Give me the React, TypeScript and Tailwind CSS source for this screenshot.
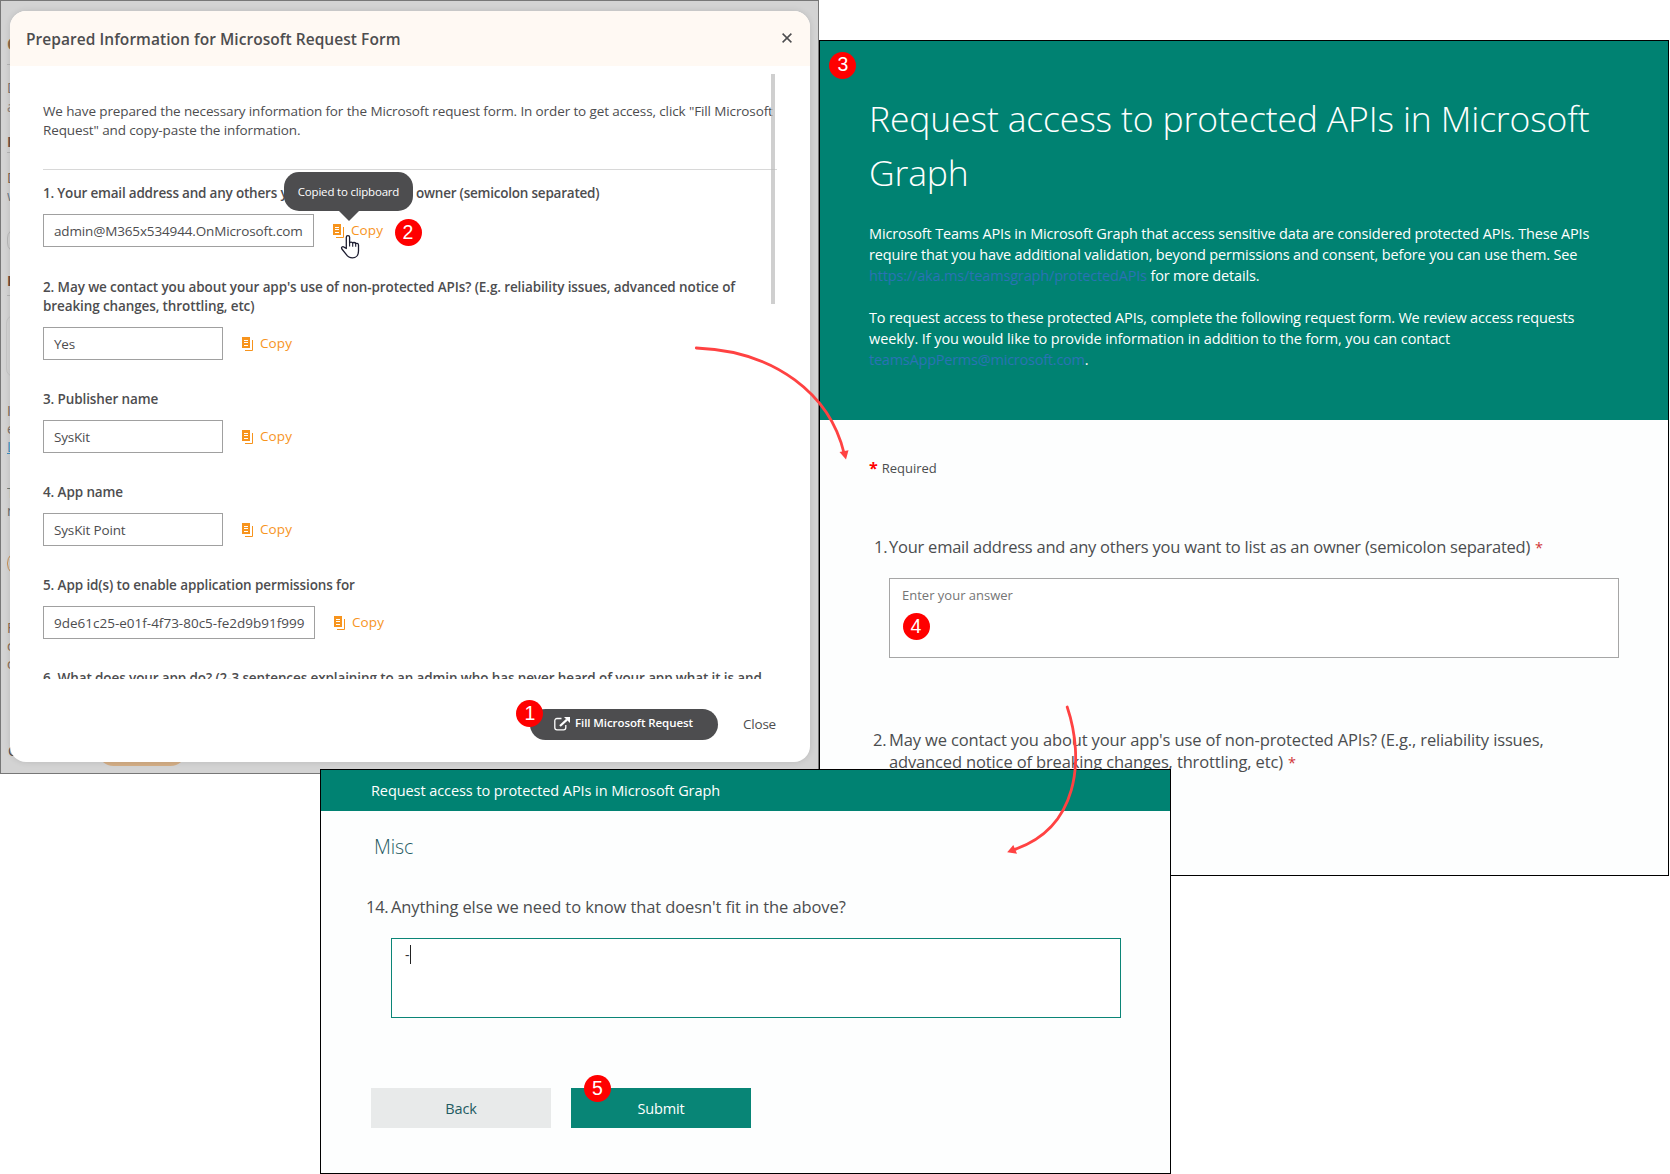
import type { ReactNode } from "react";

function CopyIcon() {
  return (
    <svg width="12" height="15" viewBox="0 0 12 15" className="shrink-0">
      <rect x="0" y="0" width="8" height="11" fill="#f7941d" />
      <path d="M2 3.5h4M2 5.5h4M2 8.5h4" stroke="#fff" strokeWidth="1" />
      <path d="M10.5 3v10.5H3" fill="none" stroke="#f7941d" strokeWidth="1" />
    </svg>
  );
}

function ExternalIcon() {
  return (
    <svg width="16" height="14" viewBox="0 0 16 14" className="relative -top-px shrink-0">
      <path
        d="M7.5 1.5H3A2.2 2.2 0 0 0 .8 3.7v6.9A2.2 2.2 0 0 0 3 12.8h6.6a2.2 2.2 0 0 0 2.2-2.2V8"
        fill="none"
        stroke="#fff"
        strokeWidth="1.3"
      />
      <path d="M6 9 13 2.6" stroke="#fff" strokeWidth="2.2" />
      <path d="M10 0h6v6z" fill="#fff" />
    </svg>
  );
}

function HandCursor() {
  return (
    <svg width="20" height="25" viewBox="0 0 20 25" className="absolute left-[340px] top-[234px]">
      <path
        d="M6.3 14.5V3.2C6.3 1.1 9.6 1.1 9.6 3.2V9C9.7 7.7 12.6 7.7 12.7 9.3 12.8 8.1 15.6 8.2 15.7 9.9 15.9 9 18.5 9.1 18.5 11V17C18.5 21.5 15.7 23.9 12.5 23.9 9 23.9 7.5 22.4 6 20.2L1.9 15C.8 13.1 2.7 12 4 13.1z"
        fill="#fff"
        stroke="#1c1c30"
        strokeWidth="1.3"
        strokeLinejoin="round"
      />
      <path d="M9.6 8.5v4M12.7 9.2v3.5M15.7 9.8v3" stroke="#1c1c30" strokeWidth="1.1" />
    </svg>
  );
}

function Badge({ n, className }: { n: number; className: string }) {
  return (
    <span
      className={`absolute flex size-[27px] items-center justify-center rounded-full bg-[#ff0000] font-['Liberation_Sans',sans-serif] text-[19.5px] leading-none text-white ${className}`}
    >
      {n}
    </span>
  );
}

function Field({
  label,
  value,
  box,
  className = "mb-[30px]",
}: {
  label: ReactNode;
  value: string;
  box: string;
  className?: string;
}) {
  return (
    <div className={className}>
      <div className="text-[13.5px] leading-[19px] font-semibold tracking-[-0.11px] whitespace-nowrap">{label}</div>
      <div className="mt-[11px] flex items-center">
        <div className={`flex h-[33px] items-center border border-[#a0a0a0] bg-white pt-px pl-[10px] text-[13.5px] whitespace-nowrap ${box}`}>
          {value}
        </div>
        <div className="mt-[2px] ml-[19px] flex items-center gap-[6px] text-[13.5px] tracking-[0.1px] text-[#f7941d]">
          <CopyIcon />
          <span className="relative -top-px">Copy</span>
        </div>
      </div>
    </div>
  );
}

/* Page content that shows in the strip left of the dialog. */
const strip: { text: string; style: string }[] = [
  { text: "C", style: "top-[34px] text-[16px] font-bold text-[#8a6a4c]" },
  { text: "D", style: "top-[77px] text-[#7d726c]" },
  { text: "a", style: "top-[96px] text-[#8d8178]" },
  { text: "P", style: "top-[131px] font-bold text-[#6e5448]" },
  { text: "D", style: "top-[167px] text-[#7d6450]" },
  { text: "w", style: "top-[185px] text-[#6f7a85]" },
  { text: "P", style: "top-[270px] font-bold text-[#6e4c3c]" },
  { text: "I", style: "top-[400px] text-[#7d6450]" },
  { text: "e", style: "top-[418px] text-[#7d7068]" },
  { text: "L", style: "top-[436px] text-[#3f8fc0] underline" },
  { text: "T", style: "top-[482px] text-[#6f7a75]" },
  { text: "n", style: "top-[500px] text-[#6a6a6a]" },
  { text: "F", style: "top-[617px] text-[#8a6a50]" },
  { text: "c", style: "top-[635px] text-[#8a6a50]" },
  { text: "c", style: "top-[653px] text-[#8a6a50]" },
];

function PreparedInfoWindow() {
  return (
    <section className="absolute left-0 top-0 h-[774px] w-[819px] overflow-hidden border border-[#777] bg-[#d3d3d3] text-[#4d4d4f]">
      {strip.map((s, i) => (
        <span key={i} className={`absolute left-[6px] w-[4px] overflow-hidden text-[14px] leading-[19px] ${s.style}`}>
          {s.text}
        </span>
      ))}
      <span className="absolute left-[6px] top-[63px] h-px w-4 bg-[#b5b5b5]" />
      <span className="absolute left-[6px] top-[151px] h-px w-4 bg-[#b5b5b5]" />
      <span className="absolute left-[6px] top-[294px] h-px w-4 bg-[#b5b5b5]" />
      <span className="absolute left-[6px] top-[227px] h-[25px] w-8 rounded-l-[10px] border border-[#b8b8b8]" />
      <span className="absolute left-[5px] top-[314px] h-[62px] w-8 rounded-l-[8px] border border-[#c6c6c6]" />
      <span className="absolute left-[6px] top-[550px] h-[25px] w-8 rounded-l-[12px] border border-[#c99255]" />
      <span className="absolute left-[7px] top-[740px] text-[14px] leading-[20px]">C</span>
      <span className="absolute left-[97px] top-[734px] h-[31px] w-[88px] rounded-full bg-[#d4ae86]" />

      <div className="absolute left-[9px] top-[10px] flex h-[751px] w-[800px] flex-col overflow-hidden rounded-[16px] bg-white shadow-[0_0_6px_rgba(0,0,0,0.12)]">
        <header className="flex h-[55px] shrink-0 items-center justify-between bg-[#fff9f3] pr-[17px] pl-4">
          <h1 className="text-[15.5px] leading-[20px] font-semibold tracking-[0.05px]">
            Prepared Information for Microsoft Request Form
          </h1>
          <svg width="12" height="12" viewBox="0 0 12 12" className="relative -top-px">
            <path d="M1.6 1.6l8.8 8.8M10.4 1.6 1.6 10.4" stroke="#4d4d4f" strokeWidth="1.5" />
          </svg>
        </header>

        <div className="relative h-[613px] shrink-0 overflow-hidden pt-[36px] pl-[33px]">
          <p className="text-[13.5px] leading-[19px] tracking-[-0.115px] whitespace-nowrap">
            We have prepared the necessary information for the Microsoft request form. In order to get access, click "Fill Microsoft
            <br />
            Request" and copy-paste the information.
          </p>
          <div className="mt-[29px] mb-[14px] h-px w-[734px] bg-[#d8d8d8]" />
          <Field
            className="mb-[31px]"
            label={
              <span className="tracking-[-0.2px]">
                1. Your email address and any others y
                <span className="tracking-[-0.27px]">ou want to list as an</span>{" "}
                <span className="tracking-[-0.22px]">owner (semicolon separated)</span>
              </span>
            }
            value="admin@M365x534944.OnMicrosoft.com"
            box="w-[271px] tracking-[-0.14px]"
          />
          <Field
            label={
              <>
                2. May we contact you about your app's use of non-protected APIs? (E.g. reliability issues, advanced notice of
                <br />
                breaking changes, throttling, etc)
              </>
            }
            value="Yes"
            box="w-[180px] tracking-[-0.2px]"
          />
          <Field label="3. Publisher name" value="SysKit" box="w-[180px] tracking-[-0.2px]" />
          <Field label="4. App name" value="SysKit Point" box="w-[180px] tracking-[-0.15px]" />
          <Field
            label="5. App id(s) to enable application permissions for"
            value="9de61c25-e01f-4f73-80c5-fe2d9b91f999"
            box="w-[272px]"
          />
          <Field
            label="6. What does your app do? (2-3 sentences explaining to an admin who has never heard of your app what it is and"
            value=""
            box="w-[180px]"
          />
          <div className="absolute top-[8px] left-[761px] h-[230px] w-[4px] bg-[#bbbbbb]/70" />
        </div>

        <footer className="flex justify-end pt-[30px] pr-[34px]">
          <button className="flex h-[31px] w-[188px] items-center rounded-full bg-[#4d4d4f] pl-6 text-[11.5px] font-semibold tracking-[-0.08px] whitespace-nowrap text-white">
            <ExternalIcon />
            <span className="relative -top-[2px] ml-[5px]">Fill Microsoft Request</span>
          </button>
          <button className="ml-[25px] text-[13.5px] tracking-[-0.2px]">Close</button>
        </footer>
      </div>

      <div className="absolute left-[283px] top-[171px] flex h-[39px] w-[129px] items-center justify-center rounded-[15px] bg-[#4d4d4f] text-[11.5px] tracking-[-0.19px] whitespace-nowrap text-white">
        Copied to clipboard
        <svg width="22" height="11" viewBox="0 0 22 11" className="absolute top-[38px] left-[54px]">
          <path d="M0 0h22L11 11z" fill="#4d4d4f" />
        </svg>
      </div>
    </section>
  );
}

function RequestFormWindow() {
  return (
    <section className="absolute left-[819px] top-[40px] h-[836px] w-[850px] border border-black bg-[#fdfefe] text-[#4b4d4f]">
      <header className="h-[379px] bg-[#008272] pt-[50px] pl-[49px] whitespace-nowrap text-white">
        <h2 className="text-[35.5px] leading-[54px] font-light tracking-[-0.14px]">
          Request access to protected APIs in Microsoft
          <br />
          Graph
        </h2>
        <p className="mt-[23px] h-[63px] pt-px text-[14.5px] leading-[21px] tracking-[-0.16px]">
          Microsoft Teams APIs in Microsoft Graph that access sensitive data are considered protected APIs. These APIs
          <br />
          require that you have additional validation, beyond permissions and consent, before you can use them. See
          <br />
          <a className="text-[#2a72b5]">https://aka.ms/teamsgraph/protectedAPIs</a> for more details.
        </p>
        <p className="mt-[21px] pt-px text-[14.5px] leading-[21px] tracking-[-0.17px]">
          To request access to these protected APIs, complete the following request form. We review access requests
          <br />
          <span className="tracking-[-0.1px]">
            weekly. If you would like to provide information in addition to the form, you can contact
          </span>
          <br />
          <a className="tracking-[-0.23px] text-[#2a72b5]">teamsAppPerms@microsoft.com</a>.
        </p>
      </header>

      <div className="flex pt-[38px] pl-[49px] text-[13px] leading-[20px]">
        <span className="mr-[4px] text-[16px] font-bold text-[#f00]">*</span>
        <span>Required</span>
      </div>

      <div className="mt-[58px] flex pl-[54px] text-[16.5px] leading-[22px] whitespace-nowrap">
        <span className="w-[15px] tracking-[-0.3px]">1.</span>
        <span className="tracking-[-0.238px]">
          Your email address and any others you want to list as an owner (semicolon separated)
          <span className="ml-[5px] text-[14.5px] leading-none text-[#d13438]">*</span>
        </span>
      </div>
      <div className="mt-[20px] ml-[69px] h-[80px] w-[730px] border border-[#a6a6a6] bg-white pt-[6px] pl-[12px] text-[13px] leading-[20px] text-[#757575]">
        Enter your answer
      </div>

      <div className="mt-[71px] flex pl-[53px] text-[16.5px] leading-[22px] whitespace-nowrap">
        <span className="w-[16px] tracking-[-0.3px]">2.</span>
        <span className="tracking-[-0.14px]">
          May we contact you about your app's use of non-protected APIs? (E.g., reliability issues,
          <br />
          advanced notice of breaking changes, throttling, etc)
          <span className="ml-[5px] text-[14.5px] leading-none text-[#d13438]">*</span>
        </span>
      </div>
    </section>
  );
}

function MiscWindow() {
  return (
    <section className="absolute left-[320px] top-[769px] h-[405px] w-[851px] border border-black bg-[#fdfefe] text-[#4b4d4f]">
      <header className="flex h-[41px] items-center bg-[#008272] pl-[50px] text-[14.5px] tracking-[-0.075px] text-white">
        <span>Request access to protected APIs in Microsoft Graph</span>
      </header>
      <h3 className="mt-[22px] pl-[53px] text-[19.5px] leading-[28px] font-light tracking-[-0.15px] text-[#1f5b62]">Misc</h3>
      <div className="mt-[35px] flex pl-[45px] text-[16.5px] leading-[22px]">
        <span className="w-[25px] tracking-[-0.3px]">14.</span>
        <span className="tracking-[-0.1px]">Anything else we need to know that doesn't fit in the above?</span>
      </div>
      <div className="mt-[20px] ml-[70px] flex h-[80px] w-[730px] border border-[#0b8577] bg-white pt-[6px] pl-[13px] text-[14px] leading-[20px] text-[#333]">
        <span className="w-[5px]">-</span>
        <span className="h-[19px] w-px bg-[#222]" />
      </div>
      <div className="mt-[70px] ml-[50px] flex gap-[20px] text-[14.5px] tracking-[-0.15px]">
        <button className="h-[40px] w-[180px] bg-[#e8eaea] pt-[2px] text-[#1f5b62]">Back</button>
        <button className="h-[40px] w-[180px] bg-[#088576] pt-[2px] font-medium text-white">Submit</button>
      </div>
    </section>
  );
}

export default function App() {
  return (
    <main className="relative h-[1174px] w-[1670px] overflow-hidden bg-white font-['Open_Sans','Noto_Sans',sans-serif]">
      <PreparedInfoWindow />
      <RequestFormWindow />
      <MiscWindow />

      <svg width="1670" height="1174" viewBox="0 0 1670 1174" className="pointer-events-none absolute inset-0">
        <g fill="none" stroke="#ff4242" strokeWidth="2.8" strokeLinecap="round">
          <path d="M696.3 348C776 351 830 395 844 453" />
          <path d="M1067.2 707C1085 760 1078 828 1014 849.6" />
        </g>
        <path d="M839.5 452 848.5 450.3 846 459.5z" fill="#ff4242" />
        <path d="M1013.3 845 1017 853.8 1007.2 852.2z" fill="#ff4242" />
      </svg>

      <Badge n={1} className="left-[516.4px] top-[700.4px]" />
      <Badge n={2} className="left-[394.5px] top-[219.4px]" />
      <Badge n={3} className="left-[829.4px] top-[51.5px]" />
      <Badge n={4} className="left-[902.5px] top-[613.4px]" />
      <Badge n={5} className="left-[584px] top-[1075.4px]" />
      <HandCursor />
    </main>
  );
}
